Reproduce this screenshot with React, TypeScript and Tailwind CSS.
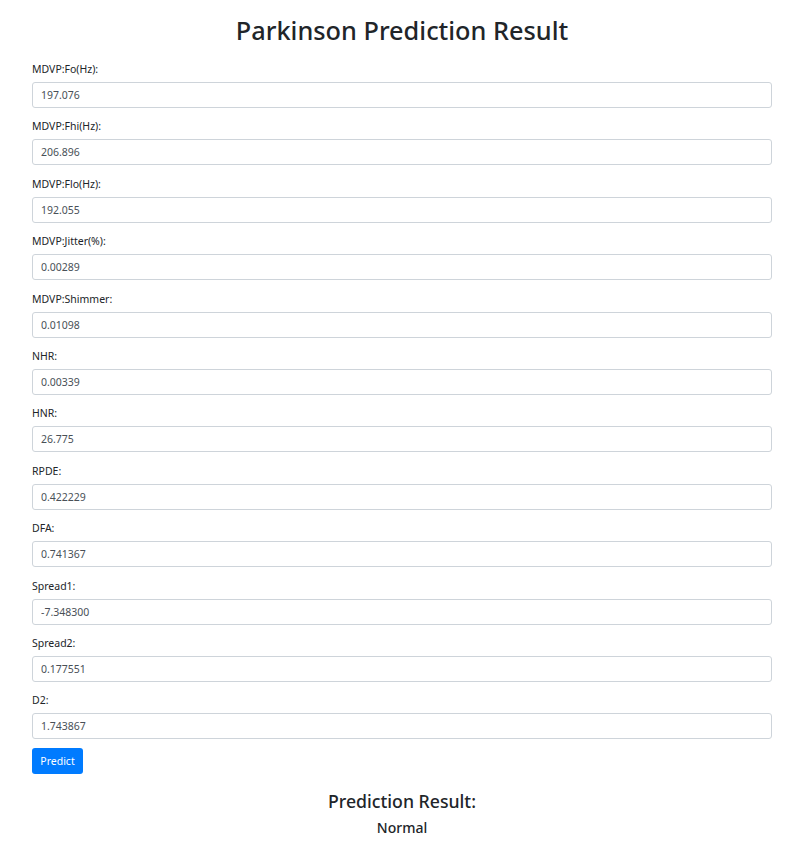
import React from "react";

const FIELDS: [string, string][] = [
  ["MDVP:Fo(Hz):", "197.076"],
  ["MDVP:Fhi(Hz):", "206.896"],
  ["MDVP:Flo(Hz):", "192.055"],
  ["MDVP:Jitter(%):", "0.00289"],
  ["MDVP:Shimmer:", "0.01098"],
  ["NHR:", "0.00339"],
  ["HNR:", "26.775"],
  ["RPDE:", "0.422229"],
  ["DFA:", "0.741367"],
  ["Spread1:", "-7.348300"],
  ["Spread2:", "0.177551"],
  ["D2:", "1.743867"],
];

export default function App() {
  return (
    <div
      className="min-h-[855px] bg-white text-[#212529]"
      style={{ fontFamily: '"Noto Sans", "Open Sans", sans-serif' }}
    >
      <div className="ml-[32px] w-[740px] pt-[14px]">
        <h1 className="text-center text-[25.3px] leading-[32px] font-medium mb-[15px]">
          Parkinson Prediction Result
        </h1>
        <form onSubmit={(e) => e.preventDefault()}>
          {FIELDS.map(([label, value], i) => (
            <div key={label} className={i === FIELDS.length - 1 ? "mb-[8px]" : "mb-[10.4px]"}>
              <label className="block text-[10.5px] leading-[16px] mb-[5px]">{label}</label>
              <input
                type="text"
                defaultValue={value}
                className="block w-full h-[26px] px-[8px] text-[10.5px] text-[#495057] border border-[#ced4da] rounded-[3px] bg-white outline-none"
              />
            </div>
          ))}
          <button
            type="submit"
            className="h-[26px] w-[51px] rounded-[3px] bg-[#007bff] text-white text-[10.5px] leading-[16px]"
          >
            Predict
          </button>
        </form>
        <h3 className="text-center text-[17.7px] leading-[22px] font-medium mt-[16px]">
          Prediction Result:
        </h3>
        <h5 className="text-center text-[14px] leading-[17px] font-medium mt-[7px]">Normal</h5>
      </div>
    </div>
  );
}
